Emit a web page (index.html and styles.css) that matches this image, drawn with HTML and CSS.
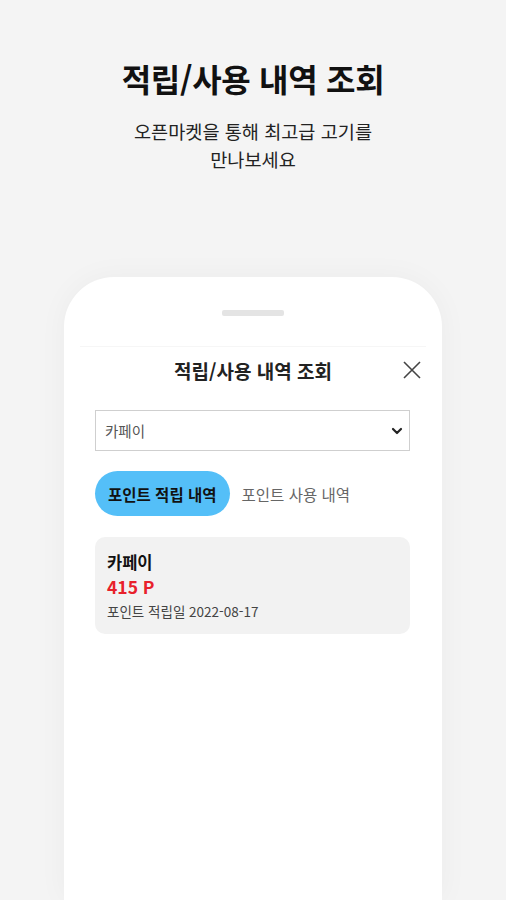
FILE: index.html
```html
<!DOCTYPE html>
<html lang="ko">
<head>
<meta charset="utf-8">
<link rel="stylesheet" href="styles.css">
</head>
<body>
<header class="intro">
  <h1 class="intro-title">적립/사용 내역 조회</h1>
  <p class="intro-sub">오픈마켓을 통해 최고급 고기를<br>만나보세요</p>
</header>
<div class="phone">
  <div class="grabber"></div>
  <div class="sheet">
    <div class="sheet-head">
      <h2 class="sheet-title">적립/사용 내역 조회</h2>
      <svg class="close" width="20" height="20" viewBox="0 0 20 20"><path d="M2 2 L18 18 M18 2 L2 18" stroke="#444" stroke-width="1.6" fill="none"/></svg>
    </div>
    <div class="select">
      <span class="select-text">카페이</span>
      <svg class="chev" width="12" height="8" viewBox="0 0 12 8"><path d="M2 2 L6 6 L10 2" stroke="#222" stroke-width="2.2" fill="none" stroke-linecap="round" stroke-linejoin="round"/></svg>
    </div>
    <div class="tabs">
      <div class="tab active">포인트 적립 내역</div>
      <div class="tab">포인트 사용 내역</div>
    </div>
    <div class="card">
      <div class="card-name">카페이</div>
      <div class="card-points">415 P</div>
      <div class="card-date">포인트 적립일 2022-08-17</div>
    </div>
  </div>
</div>
</body>
</html>
```
FILE: styles.css
```css
html, body {
  margin: 0;
  padding: 0;
  height: 900px;
  overflow: hidden;
}
body {
  background: #f4f4f4;
  font-family: "Noto Sans CJK KR", "Noto Sans", sans-serif;
  color: #111;
}
.intro {
  text-align: center;
  padding-top: 56px;
}
.intro-title {
  margin: 0;
  font-size: 32px;
  font-weight: 700;
  line-height: 44px;
  color: #111;
  letter-spacing: -0.3px;
}
.intro-sub {
  margin: 17px 0 0;
  font-size: 18.6px;
  line-height: 28px;
  color: #222;
  font-weight: 400;
}
.phone {
  margin: 104px auto 0;
  width: 378px;
  height: 623px;
  background: #fff;
  border-radius: 50px 50px 0 0;
  box-shadow: 0 0 30px rgba(0,0,0,0.04);
  display: flex;
  flex-direction: column;
  align-items: center;
}
.grabber {
  margin-top: 33px;
  width: 62px;
  height: 6px;
  border-radius: 2px;
  background: #e4e4e4;
}
.sheet {
  margin-top: 30px;
  width: 346px;
  border-top: 1px solid #f6f6f6;
  display: flex;
  flex-direction: column;
  align-items: stretch;
}
.sheet-head {
  position: relative;
  height: 46px;
  display: flex;
  align-items: center;
  justify-content: center;
}
.sheet-title {
  margin: 0;
  font-size: 19px;
  font-weight: 700;
  color: #222;
}
.close {
  position: absolute;
  right: 4px;
  top: 13px;
}
.select {
  margin: 17px 16px 0 15px;
  height: 41px;
  border: 1px solid #cfcfcf;
  box-sizing: border-box;
  display: flex;
  align-items: center;
  justify-content: space-between;
  padding: 0 6px 0 9px;
}
.select-text {
  font-size: 14.5px;
  color: #555;
}
.tabs {
  margin: 20px 16px 0 15px;
  display: flex;
  align-items: center;
  gap: 12px;
}
.tab {
  font-size: 15.5px;
  color: #666;
  height: 45px;
  display: flex;
  align-items: center;
}
.tab.active {
  background: #54bff8;
  color: #111;
  font-weight: 700;
  border-radius: 23px;
  padding: 0 13px;
}
.card {
  margin: 21px 16px 0 15px;
  background: #f2f2f2;
  border-radius: 10px;
  height: 97px;
  box-sizing: border-box;
  padding: 13px 12px;
  display: flex;
  flex-direction: column;
}
.card-name {
  font-size: 16.5px;
  font-weight: 700;
  color: #111;
  line-height: 24px;
}
.card-points {
  font-size: 17.5px;
  font-weight: 700;
  color: #e8212b;
  line-height: 25px;
}
.card-date {
  font-size: 13.5px;
  color: #444;
  line-height: 24px;
}
```
